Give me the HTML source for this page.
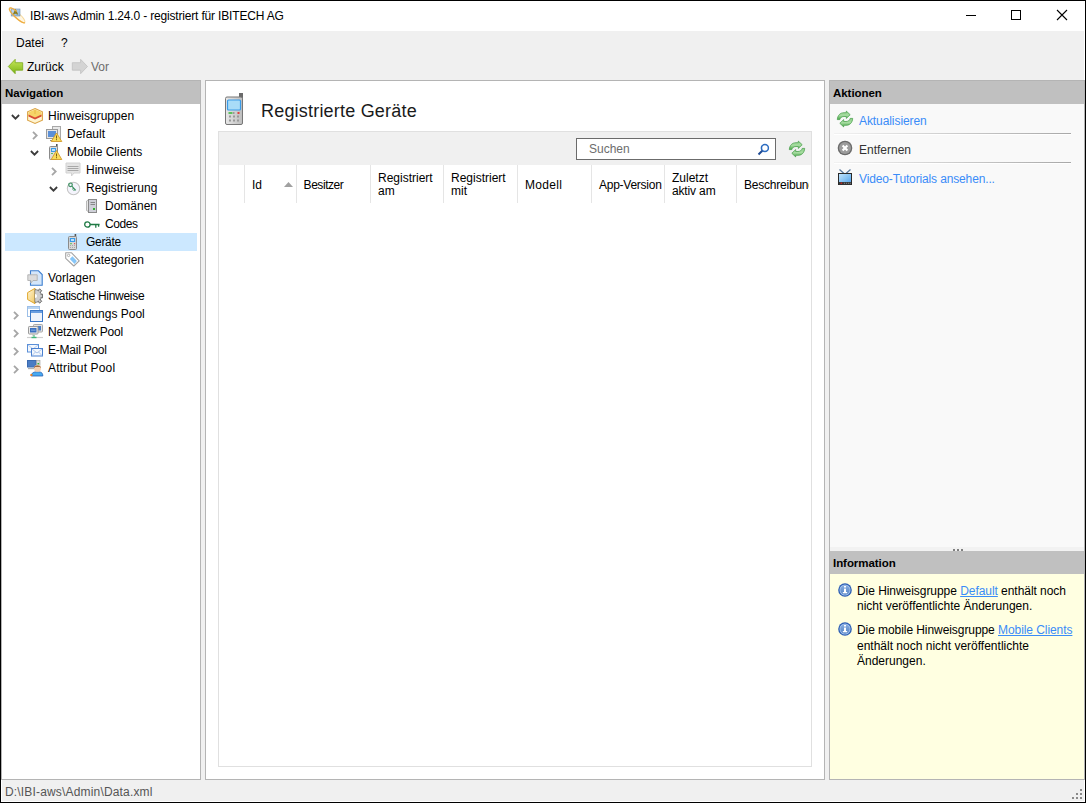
<!DOCTYPE html>
<html><head><meta charset="utf-8">
<style>
*{margin:0;padding:0;box-sizing:border-box}
html,body{width:1086px;height:803px;overflow:hidden;background:#fff}
body{position:relative;font-family:"Liberation Sans",sans-serif;font-size:12px;color:#000}
.a{position:absolute}
svg{position:absolute;overflow:visible}
.t{position:absolute;white-space:nowrap;line-height:15px;height:15px}
.b{font-weight:bold;font-size:11.5px;letter-spacing:-0.05px}
.lk{color:#3a8cf8}
.ul{text-decoration:underline}
</style></head><body>
<div class="a" style="left:0;top:0;width:1086px;height:803px;background:#f0f0f0"></div>
<!-- title bar -->
<div class="a" style="left:0;top:0;width:1086px;height:31px;background:#fff"></div>
<svg style="left:8px;top:6px" width="18" height="18" viewBox="0 0 18 18">
 <defs><linearGradient id="gsq" x1="0" y1="0" x2="1" y2="1"><stop offset="0" stop-color="#c8dcf0"/><stop offset="1" stop-color="#8cb4dc"/></linearGradient></defs>
 <g transform="translate(9.2 9.4) rotate(43)">
 <ellipse cx="0" cy="0" rx="10.4" ry="2.6" fill="#fff6e2" stroke="#f6d89a" stroke-width="1"/>
 </g>
 <rect x="3.2" y="3" width="8.8" height="7" fill="url(#gsq)" stroke="#7090b0" stroke-width="0.6"/>
 <path d="M5.5 8.6 L7.5 4.3 L9.5 8.6 M6.3 7 H8.7" fill="none" stroke="#8a7a18" stroke-width="1.3"/>
 <g transform="translate(9.2 9.4) rotate(43)">
 <path d="M-10.4 0 A10.4 2.6 0 0 0 10.4 0" fill="none" stroke="#eeac40" stroke-width="1.3"/>
 <path d="M-10.4 0 A10.4 2.6 0 0 1 -3 -2.5" fill="none" stroke="#eeac40" stroke-width="1.3"/>
 </g>
</svg>
<div class="t" style="left:30px;top:9px;letter-spacing:-0.17px">IBI-aws Admin 1.24.0 - registriert für IBITECH AG</div>
<div class="a" style="left:966px;top:15px;width:10px;height:1px;background:#000"></div>
<div class="a" style="left:1011px;top:10px;width:10px;height:10px;border:1px solid #000"></div>
<svg style="left:1057px;top:10px" width="10" height="10" viewBox="0 0 10 10"><path d="M0 0 L10 10 M10 0 L0 10" stroke="#000" stroke-width="1.1"/></svg>
<!-- menu -->
<div class="t" style="left:16px;top:36px">Datei</div>
<div class="t" style="left:61px;top:36px">?</div>
<!-- toolbar -->
<svg style="left:8px;top:59px" width="16" height="15" viewBox="0 0 16 15">
 <defs><linearGradient id="ga" x1="0" y1="0" x2="0" y2="1"><stop offset="0" stop-color="#c8e85a"/><stop offset="1" stop-color="#7cb518"/></linearGradient></defs>
 <path d="M0.3 7.5 L7.2 0.3 L7.2 3.7 L14.7 3.7 L14.7 11.2 L7.2 11.2 L7.2 14.7 Z" fill="url(#ga)" stroke="#78a81c" stroke-width="0.8"/>
</svg>
<div class="t" style="left:27px;top:60px">Zurück</div>
<svg style="left:72px;top:59px" width="16" height="15" viewBox="0 0 16 15">
 <path d="M15.5 7.5 L8.6 0.3 L8.6 3.7 L0.3 3.7 L0.3 11.2 L8.6 11.2 L8.6 14.7 Z" fill="#d4d4d4" stroke="#c0c0c0" stroke-width="0.8"/>
</svg>
<div class="t" style="left:91px;top:60px;color:#6d6d6d">Vor</div>

<!-- left panel -->
<div class="a" style="left:1px;top:80px;width:200px;height:700px;background:#fff;border:1px solid #b4b4b4"></div>
<div class="a" style="left:2px;top:81px;width:198px;height:23px;background:#c0c0c0"></div>
<div class="t b" style="left:5px;top:86px">Navigation</div>

<!-- chevrons -->
<svg style="left:11px;top:114px" width="9" height="6" viewBox="0 0 9 6"><path d="M0.9 1 L4.5 4.7 L8.1 1" fill="none" stroke="#3c3c3c" stroke-width="1.8"/></svg>
<svg style="left:32px;top:131px" width="6" height="9" viewBox="0 0 6 9"><path d="M1 0.9 L4.7 4.5 L1 8.1" fill="none" stroke="#a6a6a6" stroke-width="1.8"/></svg>
<svg style="left:30px;top:150px" width="9" height="6" viewBox="0 0 9 6"><path d="M0.9 1 L4.5 4.7 L8.1 1" fill="none" stroke="#3c3c3c" stroke-width="1.8"/></svg>
<svg style="left:51px;top:167px" width="6" height="9" viewBox="0 0 6 9"><path d="M1 0.9 L4.7 4.5 L1 8.1" fill="none" stroke="#a6a6a6" stroke-width="1.8"/></svg>
<svg style="left:49px;top:186px" width="9" height="6" viewBox="0 0 9 6"><path d="M0.9 1 L4.5 4.7 L8.1 1" fill="none" stroke="#3c3c3c" stroke-width="1.8"/></svg>
<svg style="left:13px;top:311px" width="6" height="9" viewBox="0 0 6 9"><path d="M1 0.9 L4.7 4.5 L1 8.1" fill="none" stroke="#a6a6a6" stroke-width="1.8"/></svg>
<svg style="left:13px;top:329px" width="6" height="9" viewBox="0 0 6 9"><path d="M1 0.9 L4.7 4.5 L1 8.1" fill="none" stroke="#a6a6a6" stroke-width="1.8"/></svg>
<svg style="left:13px;top:347px" width="6" height="9" viewBox="0 0 6 9"><path d="M1 0.9 L4.7 4.5 L1 8.1" fill="none" stroke="#a6a6a6" stroke-width="1.8"/></svg>
<svg style="left:13px;top:365px" width="6" height="9" viewBox="0 0 6 9"><path d="M1 0.9 L4.7 4.5 L1 8.1" fill="none" stroke="#a6a6a6" stroke-width="1.8"/></svg>
<!-- selection -->
<div class="a" style="left:5px;top:233px;width:192px;height:18px;background:#cce8ff"></div>
<!-- icons -->
<svg style="left:27px;top:108px" width="16" height="16" viewBox="0 0 16 16">
 <polygon points="8,0.6 15.4,3.8 15.4,12.2 8,15.4 0.6,12.2 0.6,3.8" fill="#fff4d0" stroke="#dba448" stroke-width="1.1"/>
 <polygon points="1.5,4.2 8,1.5 14.5,4.2 14.5,8 8,10.5 1.5,8" fill="#f6d468"/>
 <polygon points="1.5,6.5 8,9.5 14.5,6.5 14.5,8.5 8,11.5 1.5,8.5" fill="#d84a34"/>
 <path d="M8 2 L8 6" stroke="#e6b040" stroke-width="0.8"/>
</svg>
<div class="t" style="left:48px;top:109px">Hinweisgruppen</div>

<svg style="left:46px;top:126px" width="16" height="16" viewBox="0 0 16 16">
 <rect x="6.5" y="0.5" width="8" height="13" fill="#e8e8e8" stroke="#a8a8a8"/>
 <rect x="0.5" y="3.5" width="11" height="9" fill="#e6e6e6" stroke="#9a9a9a"/>
 <rect x="2" y="5" width="8" height="6" fill="#5b8fd6"/>
 <path d="M4 14.5 L8 14.5" stroke="#888" stroke-width="1"/>
 <polygon points="10.5,7 15.8,15.5 5.2,15.5" fill="#f8dc5a" stroke="#d39a2a" stroke-width="0.9"/>
 <rect x="10" y="9.5" width="1" height="3" fill="#7a5a10"/><rect x="10" y="13.2" width="1" height="1" fill="#7a5a10"/>
</svg>
<div class="t" style="left:67px;top:127px">Default</div>

<svg style="left:46px;top:144px" width="16" height="16" viewBox="0 0 16 16">
 <rect x="10" y="0" width="1.6" height="5" fill="#555"/>
 <rect x="3.5" y="2.5" width="8" height="13" rx="1" fill="#dcdcdc" stroke="#8a8a8a"/>
 <rect x="5" y="4" width="5" height="4" fill="#3a9be8"/><rect x="6" y="5" width="3" height="2" fill="#bde0fa"/>
 <rect x="5" y="9" width="2" height="1" fill="#5cc05c"/>
 <polygon points="10.5,6.5 15.8,15.5 5.2,15.5" fill="#f8dc5a" stroke="#d39a2a" stroke-width="0.9"/>
 <rect x="10" y="9.5" width="1" height="3" fill="#7a5a10"/><rect x="10" y="13.2" width="1" height="1" fill="#7a5a10"/>
</svg>
<div class="t" style="left:67px;top:145px">Mobile Clients</div>

<svg style="left:65px;top:162px" width="16" height="16" viewBox="0 0 16 16">
 <path d="M1 1 H15 V11 H9 L6.5 14 L6.5 11 H1 Z" fill="#e4e4e4" stroke="#d2d2d2" stroke-width="1"/>
 <path d="M2.5 4.5 H13.5 M2.5 6.5 H13.5 M2.5 8.5 H13.5" stroke="#a8a8a8" stroke-width="1"/>
</svg>
<div class="t" style="left:86px;top:163px">Hinweise</div>

<svg style="left:65px;top:180px" width="16" height="16" viewBox="0 0 16 16">
 <circle cx="8.5" cy="8.5" r="6.2" fill="#f4f4fc" stroke="#c4c4c4" stroke-width="1.1"/>
 <circle cx="5.5" cy="4.8" r="1.8" fill="none" stroke="#3c9060" stroke-width="1.2"/>
 <path d="M6.8 6.2 L10.8 10.4 M8.6 8.2 L7.4 9.4 M9.8 9.4 L8.6 10.6" stroke="#3c9060" stroke-width="1.2"/>
</svg>
<div class="t" style="left:86px;top:181px">Registrierung</div>

<svg style="left:84px;top:198px" width="16" height="16" viewBox="0 0 16 16">
 <path d="M2.5 3 L5 1.5 L5 14 L2.5 12.5 Z" fill="#e8e8e8" stroke="#aaa" stroke-width="0.8"/>
 <rect x="4.5" y="1.5" width="8" height="13" fill="#cfd0d8" stroke="#8a8a8a"/>
 <path d="M6.5 4.5 H11 M6.5 6.5 H11" stroke="#888" stroke-width="1"/>
 <rect x="9" y="10" width="2" height="2" fill="#30b030"/>
</svg>
<div class="t" style="left:105px;top:199px">Domänen</div>

<svg style="left:84px;top:216px" width="16" height="16" viewBox="0 0 16 16">
 <circle cx="3.4" cy="8.5" r="2.7" fill="none" stroke="#1f7a45" stroke-width="1.3"/>
 <path d="M6 8.5 H15.6 M11.8 8.5 V11.8 M14.6 8.5 V10.8" stroke="#1f7a45" stroke-width="1.3"/>
</svg>
<div class="t" style="left:105px;top:217px;letter-spacing:-0.45px">Codes</div>

<svg style="left:65px;top:234px" width="16" height="16" viewBox="0 0 16 16">
 <rect x="9.6" y="0" width="1.6" height="4" fill="#555"/>
 <rect x="3.5" y="2.5" width="8" height="13" rx="1" fill="#d8d8d8" stroke="#8a8a8a"/>
 <rect x="4.8" y="4" width="5.4" height="4" fill="#3a9be8"/><rect x="6" y="5" width="3" height="2" fill="#bde0fa"/>
 <rect x="5" y="9.2" width="2" height="1" fill="#5cc05c"/><rect x="9" y="9.2" width="1.2" height="1" fill="#e04040"/>
 <g fill="#aaa"><rect x="5" y="11" width="1" height="1"/><rect x="7" y="11" width="1" height="1"/><rect x="9" y="11" width="1" height="1"/><rect x="5" y="13" width="1" height="1"/><rect x="7" y="13" width="1" height="1"/><rect x="9" y="13" width="1" height="1"/></g>
</svg>
<div class="t" style="left:86px;top:235px;letter-spacing:-0.30px">Geräte</div>

<svg style="left:65px;top:252px" width="16" height="16" viewBox="0 0 16 16">
 <path d="M0.7 0.8 L6.6 0.8 L14.2 8.9 L8.8 14 L0.7 6.3 Z" fill="#fff" stroke="#a4a4a4" stroke-width="1.1" stroke-linejoin="round"/>
 <circle cx="3.6" cy="3.4" r="1.2" fill="none" stroke="#a8a8a8" stroke-width="0.9"/>
 <path d="M7.4 4.3 L11.9 9 L9.5 11.9 L4.8 6.9 Z" fill="#86c6f8"/>
</svg>
<div class="t" style="left:86px;top:253px">Kategorien</div>

<svg style="left:27px;top:270px" width="16" height="16" viewBox="0 0 16 16">
 <path d="M3.5 0.8 H11.5 L15.2 4.5 V15.2 H3.5 Z" fill="#d4e6fa" stroke="#3d7fd0" stroke-width="1.1"/>
 <path d="M0.8 4.8 H10.2 V10.5 H6 L3.8 13 V10.5 H0.8 Z" fill="#dcdcdc" stroke="#b0b0b0" stroke-width="0.9"/>
</svg>
<div class="t" style="left:48px;top:271px">Vorlagen</div>

<svg style="left:27px;top:288px" width="16" height="16" viewBox="0 0 16 16">
 <defs><linearGradient id="gbox" x1="0" y1="0" x2="1" y2="1"><stop offset="0" stop-color="#fff6d8"/><stop offset="1" stop-color="#f2c860"/></linearGradient></defs>
 <path d="M8 0.3 L0.6 4.6 V11.5 L8 15.7 Z" fill="url(#gbox)" stroke="#e0a830" stroke-width="1"/>
 <g fill="#c4c4c4" stroke="#6a6a6a" stroke-width="0.8">
  <path d="M8 1.6 A6.4 6.4 0 0 1 14.4 8 A6.4 6.4 0 0 1 8 14.4 Z" />
 </g>
 <g fill="#c4c4c4" stroke="#5a5a5a" stroke-width="0.8">
  <rect x="12.6" y="6.2" width="2.8" height="3.6"/>
  <rect x="11.2" y="1.4" width="2.8" height="3.2" transform="rotate(40 12.6 3)"/>
  <rect x="11.2" y="11.4" width="2.8" height="3.2" transform="rotate(-40 12.6 13)"/>
 </g>
 <path d="M8.4 2.2 A5.8 5.8 0 0 1 13.8 8 A5.8 5.8 0 0 1 8.4 13.8 Z" fill="#cfcfcf"/>
 <path d="M8 6 A2 2 0 0 1 8 10 Z" fill="#fff"/>
</svg>
<div class="t" style="left:48px;top:289px;letter-spacing:-0.28px">Statische Hinweise</div>

<svg style="left:27px;top:306px" width="16" height="16" viewBox="0 0 16 16">
 <rect x="0.5" y="0.5" width="12" height="10" fill="#fff" stroke="#9cbfe8"/>
 <rect x="1" y="1" width="11" height="2" fill="#b8d4f2"/>
 <rect x="3.5" y="4.5" width="12" height="11" fill="#eef3fb" stroke="#3a78c8"/>
 <rect x="4" y="5" width="11" height="2" fill="#6a9ee0"/>
</svg>
<div class="t" style="left:48px;top:307px">Anwendungs Pool</div>

<svg style="left:27px;top:324px" width="16" height="16" viewBox="0 0 16 16">
 <rect x="6.5" y="0.5" width="9" height="7.5" rx="0.8" fill="#e4e4e4" stroke="#a8a8a8"/>
 <rect x="8" y="2" width="6" height="4.5" fill="#4a7fc8"/>
 <rect x="1.5" y="2.5" width="9.5" height="7.5" rx="0.8" fill="#ececec" stroke="#9a9a9a"/>
 <rect x="3" y="4" width="6.5" height="4.5" fill="#3a70c0"/><rect x="4" y="5.5" width="4.5" height="1.5" fill="#6a98d8"/>
 <path d="M5 11 H7.5" stroke="#bbb" stroke-width="1"/>
 <path d="M0 13.5 H16" stroke="#cfcfcf" stroke-width="1.2"/>
 <path d="M4.5 13.5 H9.5" stroke="#40b878" stroke-width="1.4"/>
 <path d="M7 11 V13" stroke="#40b878" stroke-width="1"/>
</svg>
<div class="t" style="left:48px;top:325px;letter-spacing:-0.18px">Netzwerk Pool</div>

<svg style="left:27px;top:342px" width="16" height="16" viewBox="0 0 16 16">
 <rect x="0.5" y="2.5" width="11" height="7.5" fill="#f4f8fd" stroke="#5a8fd8"/>
 <path d="M1 3 L6 7 L11 3" fill="none" stroke="#a4c0e8" stroke-width="0.8"/>
 <rect x="4.5" y="6.5" width="11" height="7.5" fill="#f4f8fd" stroke="#4a80d0"/>
 <path d="M5 7 L10 11 L15 7 M5 13.5 L8.5 10 M15 13.5 L11.5 10" fill="none" stroke="#9ab8e4" stroke-width="0.8"/>
</svg>
<div class="t" style="left:48px;top:343px;letter-spacing:-0.24px">E-Mail Pool</div>

<svg style="left:27px;top:360px" width="16" height="16" viewBox="0 0 16 16">
 <rect x="0.5" y="0.5" width="8.5" height="6.5" fill="#4a7cc4" stroke="#3a6ab0"/>
 <path d="M1 8.6 H8.5" stroke="#b0b0b0" stroke-width="1.2"/>
 <rect x="9.6" y="0.5" width="3.4" height="5" fill="#d8d8d8" stroke="#999" stroke-width="0.6"/>
 <rect x="10.5" y="3" width="1.6" height="1.4" fill="#30b030"/>
 <path d="M4.2 16 C4.5 12.6 7 11.8 10.5 11.8 C14 11.8 15.8 12.6 15.8 16 Z" fill="#48aaf2" stroke="#2a5fb0" stroke-width="0.8"/>
 <circle cx="10.5" cy="8.4" r="3.4" fill="#f6d0b0"/>
 <path d="M7 8 C6.6 4.6 14.4 4.6 14 8 L12.8 6.8 L8.4 6.8 Z" fill="#8a4a1a"/>
 <rect x="3.4" y="14" width="2" height="2" fill="#f08020"/>
</svg>
<div class="t" style="left:48px;top:361px;letter-spacing:0.14px">Attribut Pool</div>


<!-- main panel -->
<div class="a" style="left:205px;top:80px;width:620px;height:700px;background:#fff;border:1px solid #b4b4b4"></div>
<svg style="left:225px;top:93px" width="18" height="32" viewBox="0 0 18 32">
 <defs><linearGradient id="gp" x1="0" y1="0" x2="1" y2="0"><stop offset="0" stop-color="#e8e8e8"/><stop offset="1" stop-color="#bdbdbd"/></linearGradient></defs>
 <rect x="14" y="0" width="4" height="6" fill="#6a6a6a"/>
 <rect x="0.5" y="4" width="17" height="27.5" rx="1.5" fill="url(#gp)" stroke="#777" stroke-width="1"/>
 <rect x="2.5" y="7" width="13" height="10" rx="1" fill="#a8dcf8" stroke="#3a9be8" stroke-width="1.2"/>
 <rect x="3.5" y="19" width="4" height="2" fill="#5cc05c"/><rect x="8" y="19" width="1.5" height="2" fill="#999"/><rect x="12.5" y="19" width="2" height="2" fill="#e04040"/>
 <g fill="#999"><rect x="4" y="22.5" width="2" height="2"/><rect x="8" y="22.5" width="2" height="2"/><rect x="12" y="22.5" width="2" height="2"/><rect x="4" y="26.5" width="2" height="2"/><rect x="8" y="26.5" width="2" height="2"/><rect x="12" y="26.5" width="2" height="2"/></g>
</svg>
<div class="t" style="left:261px;top:101px;font-size:18px;line-height:20px;height:20px;letter-spacing:0.2px;color:#1a1a1a">Registrierte Geräte</div>
<div class="a" style="left:218px;top:131px;width:594px;height:636px;border:1px solid #e0e0e0"></div>
<div class="a" style="left:219px;top:132px;width:592px;height:33px;background:#f0f0f0"></div>
<div class="a" style="left:576px;top:138px;width:200px;height:22px;background:#fff;border:1px solid #6b6b6b"></div>
<div class="t" style="left:589px;top:142px;color:#6d6d6d">Suchen</div>
<svg style="left:757px;top:144px" width="12" height="11" viewBox="0 0 12 11">
 <circle cx="7.9" cy="4.1" r="3.5" fill="none" stroke="#2c6cc0" stroke-width="1.5"/>
 <path d="M5.3 6.8 L1.5 10.4" stroke="#1e4a94" stroke-width="2"/>
</svg>
<svg style="left:0;top:0;width:0;height:0;position:absolute"><defs>
 <linearGradient id="rg" x1="0" y1="0" x2="0" y2="1"><stop offset="0" stop-color="#8fd08a"/><stop offset="0.5" stop-color="#a6dca0"/><stop offset="1" stop-color="#4aa64a"/></linearGradient>
 </defs></svg>
<svg style="left:789px;top:141px" width="16" height="16" viewBox="0 0 16 16">
 <path d="M0.3 8.6 C0.6 4.5 3 1.7 7 1.7 L9.3 1.7 L9.3 0.1 L13.2 3.7 L9.3 7.4 L9.3 5.5 L7 5.5 C5 5.5 3.4 6.5 2.8 8.6 Z" fill="url(#rg)" stroke="#3f9a42" stroke-width="0.7" stroke-linejoin="round"/>
 <path d="M15.7 7.4 C15.4 11.5 13 14.3 9 14.3 L6.7 14.3 L6.7 15.9 L2.8 12.3 L6.7 8.6 L6.7 10.5 L9 10.5 C11 10.5 12.6 9.5 13.2 7.4 Z" fill="url(#rg)" stroke="#3f9a42" stroke-width="0.7" stroke-linejoin="round"/>
 </svg>
<!-- header separators -->

<div class="a" style="left:244px;top:165px;width:1px;height:38px;background:#e5e5e5"></div>
<div class="a" style="left:296px;top:165px;width:1px;height:38px;background:#e5e5e5"></div>
<div class="a" style="left:370px;top:165px;width:1px;height:38px;background:#e5e5e5"></div>
<div class="a" style="left:443px;top:165px;width:1px;height:38px;background:#e5e5e5"></div>
<div class="a" style="left:517px;top:165px;width:1px;height:38px;background:#e5e5e5"></div>
<div class="a" style="left:591px;top:165px;width:1px;height:38px;background:#e5e5e5"></div>
<div class="a" style="left:664px;top:165px;width:1px;height:38px;background:#e5e5e5"></div>
<div class="a" style="left:736px;top:165px;width:1px;height:38px;background:#e5e5e5"></div>
<div class="t" style="left:252px;top:178px">Id</div>
<svg style="left:284px;top:182px" width="9" height="5" viewBox="0 0 9 5"><path d="M0 5 L4.5 0 L9 5 Z" fill="#a0a0a0"/></svg>
<div class="t" style="left:303.6px;top:178px;letter-spacing:-0.45px">Besitzer</div>
<div class="t" style="left:378px;top:172px;line-height:13px;height:26px">Registriert<br>am</div>
<div class="t" style="left:451px;top:172px;line-height:13px;height:26px">Registriert<br>mit</div>
<div class="t" style="left:525px;top:178px;letter-spacing:0.3px">Modell</div>
<div class="t" style="left:599px;top:178px;letter-spacing:-0.25px">App-Version</div>
<div class="t" style="left:672px;top:172px;line-height:13px;height:26px">Zuletzt<br><span style="letter-spacing:-0.15px">aktiv am</span></div>
<div class="a" style="left:744px;top:165px;width:65px;height:38px;overflow:hidden"><div class="t" style="left:0;top:13px;letter-spacing:-0.22px">Beschreibung</div></div>


<!-- right panel -->
<div class="a" style="left:829px;top:80px;width:256px;height:700px;background:#f9f9f9;border:1px solid #b4b4b4"></div>
<div class="a" style="left:830px;top:81px;width:254px;height:23px;background:#c0c0c0"></div>
<div class="t b" style="left:833px;top:86px">Aktionen</div>

<svg style="left:837px;top:111px" width="16" height="16" viewBox="0 0 16 16">
 <path d="M0.3 8.6 C0.6 4.5 3 1.7 7 1.7 L9.3 1.7 L9.3 0.1 L13.2 3.7 L9.3 7.4 L9.3 5.5 L7 5.5 C5 5.5 3.4 6.5 2.8 8.6 Z" fill="url(#rg)" stroke="#3f9a42" stroke-width="0.7" stroke-linejoin="round"/>
 <path d="M15.7 7.4 C15.4 11.5 13 14.3 9 14.3 L6.7 14.3 L6.7 15.9 L2.8 12.3 L6.7 8.6 L6.7 10.5 L9 10.5 C11 10.5 12.6 9.5 13.2 7.4 Z" fill="url(#rg)" stroke="#3f9a42" stroke-width="0.7" stroke-linejoin="round"/>
 </svg>
<div class="t lk" style="left:859px;top:114px;letter-spacing:-0.08px">Aktualisieren</div>
<div class="a" style="left:834px;top:133px;width:237px;height:1px;background:linear-gradient(to right,#f2f2f2,#a8a8a8)"></div><div class="a" style="left:834px;top:134px;width:237px;height:1px;background:#fff"></div>
<svg style="left:837px;top:140px" width="16" height="16" viewBox="0 0 16 16">
 <circle cx="8" cy="8" r="7.3" fill="#6a6a6a"/>
 <circle cx="8" cy="8" r="6" fill="#9c9c9c"/>
 <path d="M5.6 5.6 L10.4 10.4 M10.4 5.6 L5.6 10.4" stroke="#fff" stroke-width="2.1"/>
</svg>
<div class="t" style="left:859px;top:143px;color:#333">Entfernen</div>
<div class="a" style="left:834px;top:162px;width:237px;height:1px;background:linear-gradient(to right,#f2f2f2,#a8a8a8)"></div><div class="a" style="left:834px;top:163px;width:237px;height:1px;background:#fff"></div>
<svg style="left:838px;top:169px" width="14" height="16" viewBox="0 0 14 16">
 <defs><linearGradient id="gtv" x1="0" y1="0" x2="1" y2="1"><stop offset="0" stop-color="#c4e6fe"/><stop offset="0.5" stop-color="#88c4f4"/><stop offset="1" stop-color="#4a9ae8"/></linearGradient></defs>
 <path d="M1.5 0.6 L6 4.6 M12.5 0.6 L8 4.6" fill="none" stroke="#5a7aa0" stroke-width="1.3"/>
 <rect x="0.5" y="4.5" width="13" height="11" fill="url(#gtv)" stroke="#2a2a2a" stroke-width="1"/>
 <rect x="1" y="13" width="12" height="2.5" fill="#3a3a3a"/>
 <rect x="2.5" y="13.6" width="1.6" height="1.2" fill="#e02020"/>
 <g fill="#999"><rect x="6" y="13.8" width="0.9" height="0.9"/><rect x="8" y="13.8" width="0.9" height="0.9"/><rect x="10" y="13.8" width="0.9" height="0.9"/><rect x="11.8" y="13.8" width="0.9" height="0.9"/></g>
</svg>
<div class="t lk" style="left:859px;top:172px;letter-spacing:-0.14px">Video-Tutorials ansehen...</div>

<div class="a" style="left:830px;top:547px;width:254px;height:4px;background:#f2f2f2"></div>
<div class="a" style="left:953px;top:549px;width:2px;height:2px;background:#808080"></div>
<div class="a" style="left:957px;top:549px;width:2px;height:2px;background:#808080"></div>
<div class="a" style="left:961px;top:549px;width:2px;height:2px;background:#808080"></div>
<div class="a" style="left:830px;top:551px;width:254px;height:23px;background:#c0c0c0"></div>
<div class="t b" style="left:833px;top:556px">Information</div>
<div class="a" style="left:830px;top:574px;width:254px;height:205px;background:#ffffe1"></div>
<svg style="left:838px;top:583px" width="14" height="14" viewBox="0 0 14 14">
 <defs><linearGradient id="gi583" x1="0" y1="0" x2="0" y2="1"><stop offset="0" stop-color="#88aee0"/><stop offset="1" stop-color="#5684c4"/></linearGradient></defs>
 <circle cx="7" cy="7" r="6.8" fill="#2c5eb4"/>
 <circle cx="7" cy="7" r="5.5" fill="#a8c6ee"/>
 <circle cx="7" cy="7" r="4.7" fill="url(#gi583)"/>
 <rect x="6" y="3" width="2" height="1.5" fill="#fff"/>
 <rect x="6" y="5.6" width="2" height="3.4" fill="#fff"/>
 <rect x="4.8" y="9" width="4.4" height="1.3" fill="#fff"/>
</svg>
<div class="t" style="left:857px;top:584px;line-height:15px;height:30px;color:#000"><span style="letter-spacing:-0.05px">Die Hinweisgruppe <span class="lk ul">Default</span> enthält noch</span><br>nicht veröffentlichte Änderungen.</div>
<svg style="left:838px;top:622px" width="14" height="14" viewBox="0 0 14 14">
 <defs><linearGradient id="gi622" x1="0" y1="0" x2="0" y2="1"><stop offset="0" stop-color="#88aee0"/><stop offset="1" stop-color="#5684c4"/></linearGradient></defs>
 <circle cx="7" cy="7" r="6.8" fill="#2c5eb4"/>
 <circle cx="7" cy="7" r="5.5" fill="#a8c6ee"/>
 <circle cx="7" cy="7" r="4.7" fill="url(#gi622)"/>
 <rect x="6" y="3" width="2" height="1.5" fill="#fff"/>
 <rect x="6" y="5.6" width="2" height="3.4" fill="#fff"/>
 <rect x="4.8" y="9" width="4.4" height="1.3" fill="#fff"/>
</svg>
<div class="t" style="left:857px;top:623px;line-height:15.5px;height:47px;color:#000"><span style="letter-spacing:-0.07px">Die mobile Hinweisgruppe <span class="lk ul">Mobile Clients</span></span><br>enthält noch nicht veröffentlichte<br>Änderungen.</div>


<!-- status bar -->
<div class="t" style="left:5px;top:785px;color:#555;letter-spacing:0.17px">D:\IBI-aws\Admin\Data.xml</div>
<div class="a" style="left:1080px;top:789px;width:2px;height:2px;background:#8a8a8a"></div><div class="a" style="left:1076px;top:793px;width:2px;height:2px;background:#8a8a8a"></div><div class="a" style="left:1080px;top:793px;width:2px;height:2px;background:#8a8a8a"></div><div class="a" style="left:1072px;top:797px;width:2px;height:2px;background:#8a8a8a"></div><div class="a" style="left:1076px;top:797px;width:2px;height:2px;background:#8a8a8a"></div><div class="a" style="left:1080px;top:797px;width:2px;height:2px;background:#8a8a8a"></div>
<div class="a" style="left:1px;top:31px;width:1px;height:49px;background:#fff"></div>
<div class="a" style="left:1084px;top:31px;width:1px;height:49px;background:#fff"></div>
<div class="a" style="left:1px;top:780px;width:1px;height:22px;background:#fff"></div>
<div class="a" style="left:1084px;top:780px;width:1px;height:22px;background:#fff"></div>
<div class="a" style="left:1px;top:801px;width:1084px;height:1px;background:#fff"></div>
<!-- window border -->
<div class="a" style="left:0;top:0;width:1086px;height:803px;border:1px solid #000"></div>
</body></html>
